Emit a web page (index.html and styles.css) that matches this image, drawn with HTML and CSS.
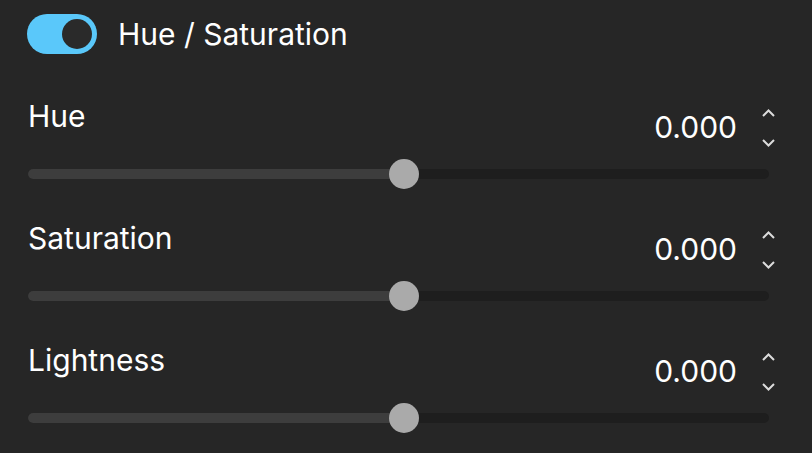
FILE: index.html
```html
<!DOCTYPE html>
<html lang="en">
<head>
<meta charset="utf-8">
<title>Hue / Saturation</title>
<link rel="stylesheet" href="styles.css">
</head>
<body>
<div class="panel">
  <div class="header">
    <div class="toggle on"><span class="knob"></span></div>
    <span class="title">Hue / Saturation</span>
  </div>

  <div class="param">
    <div class="param-head">
      <span class="label">Hue</span>
      <div class="value-group">
        <span class="value">0.000</span>
        <div class="spinner">
          <svg width="13" height="8" viewBox="0 0 13 8"><path d="M1 7L6.5 1.5L12 7" fill="none" stroke="#dcdcdc" stroke-width="2"/></svg>
          <svg width="13" height="8" viewBox="0 0 13 8"><path d="M1 1L6.5 6.5L12 1" fill="none" stroke="#dcdcdc" stroke-width="2"/></svg>
        </div>
      </div>
    </div>
    <div class="slider">
      <div class="track"><div class="fill" style="width:50.7%"></div></div>
      <div class="thumb" style="left:50.7%"></div>
    </div>
  </div>

  <div class="param">
    <div class="param-head">
      <span class="label">Saturation</span>
      <div class="value-group">
        <span class="value">0.000</span>
        <div class="spinner">
          <svg width="13" height="8" viewBox="0 0 13 8"><path d="M1 7L6.5 1.5L12 7" fill="none" stroke="#dcdcdc" stroke-width="2"/></svg>
          <svg width="13" height="8" viewBox="0 0 13 8"><path d="M1 1L6.5 6.5L12 1" fill="none" stroke="#dcdcdc" stroke-width="2"/></svg>
        </div>
      </div>
    </div>
    <div class="slider">
      <div class="track"><div class="fill" style="width:50.7%"></div></div>
      <div class="thumb" style="left:50.7%"></div>
    </div>
  </div>

  <div class="param">
    <div class="param-head">
      <span class="label">Lightness</span>
      <div class="value-group">
        <span class="value">0.000</span>
        <div class="spinner">
          <svg width="13" height="8" viewBox="0 0 13 8"><path d="M1 7L6.5 1.5L12 7" fill="none" stroke="#dcdcdc" stroke-width="2"/></svg>
          <svg width="13" height="8" viewBox="0 0 13 8"><path d="M1 1L6.5 6.5L12 1" fill="none" stroke="#dcdcdc" stroke-width="2"/></svg>
        </div>
      </div>
    </div>
    <div class="slider">
      <div class="track"><div class="fill" style="width:50.7%"></div></div>
      <div class="thumb" style="left:50.7%"></div>
    </div>
  </div>
</div>
</body>
</html>
```
FILE: styles.css
```css
html, body {
  margin: 0;
  padding: 0;
  background: #262626;
  height: 100%;
}
body {
  font-family: Inter, "Noto Sans", sans-serif;
  color: #ffffff;
  overflow: hidden;
}
.panel {
  padding: 14px 43px 0 28px;
}
.header {
  display: flex;
  align-items: center;
  gap: 21px;
  margin-left: -1px;
}
.toggle {
  width: 70px;
  height: 40px;
  border-radius: 20px;
  background: #5ac8fa;
  box-sizing: border-box;
  padding: 5px;
  display: flex;
  justify-content: flex-end;
}
.knob {
  width: 30px;
  height: 30px;
  border-radius: 50%;
  background: #2a2a2a;
}
.title {
  font-size: 30px;
  line-height: 34px;
}
.param {
  margin-top: 45px;
}
.param + .param {
  margin-top: 32px;
}
.param-head {
  display: flex;
  justify-content: space-between;
  align-items: flex-start;
  height: 60px;
  margin-right: -6px;
}
.label {
  font-size: 30px;
  line-height: 34px;
}
.value-group {
  display: flex;
  align-items: flex-start;
  gap: 25px;
  margin-top: 10px;
}
.value {
  font-size: 30px;
  line-height: 34px;
  margin-top: 1px;
}
.spinner {
  display: flex;
  flex-direction: column;
  gap: 22px;
}
.spinner svg {
  display: block;
}
.slider {
  position: relative;
  height: 30px;
  display: flex;
  align-items: center;
}
.track {
  flex: 1;
  height: 10px;
  border-radius: 5px;
  background: #1e1e1e;
  overflow: hidden;
}
.fill {
  height: 100%;
  background: #3d3d3d;
}
.thumb {
  position: absolute;
  top: 0;
  width: 30px;
  height: 30px;
  margin-left: -15px;
  border-radius: 50%;
  background: #aaaaaa;
}
```
